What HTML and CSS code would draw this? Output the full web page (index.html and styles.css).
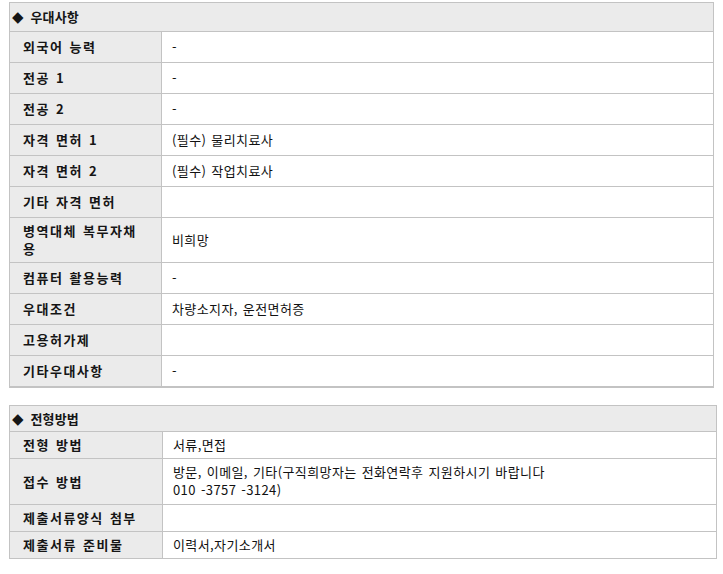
FILE: index.html
```html
<!DOCTYPE html>
<html lang="ko">
<head>
<meta charset="utf-8">
<link rel="stylesheet" href="styles.css">
</head>
<body>
<div class="page">
  <table class="info info-pref">
    <colgroup><col class="c-label"><col class="c-value"></colgroup>
    <tr><th class="sec" colspan="2"><span class="dia">◆</span> 우대사항</th></tr>
    <tr><th>외국어 능력</th><td>-</td></tr>
    <tr><th>전공 1</th><td>-</td></tr>
    <tr><th>전공 2</th><td>-</td></tr>
    <tr><th>자격 면허 1</th><td>(필수) 물리치료사</td></tr>
    <tr><th>자격 면허 2</th><td>(필수) 작업치료사</td></tr>
    <tr><th>기타 자격 면허</th><td></td></tr>
    <tr class="tall"><th>병역대체 복무자채용</th><td>비희망</td></tr>
    <tr><th>컴퓨터 활용능력</th><td>-</td></tr>
    <tr><th>우대조건</th><td>차량소지자, 운전면허증</td></tr>
    <tr><th>고용허가제</th><td></td></tr>
    <tr><th>기타우대사항</th><td>-</td></tr>
  </table>

  <table class="info info-select">
    <colgroup><col class="c-label2"><col class="c-value"></colgroup>
    <tr><th class="sec" colspan="2"><span class="dia">◆</span> 전형방법</th></tr>
    <tr><th>전형 방법</th><td>서류,면접</td></tr>
    <tr><th>접수 방법</th><td class="multi">방문, 이메일, 기타(구직희망자는 전화연락후 지원하시기 바랍니다<br>010 -3757 -3124)</td></tr>
    <tr><th>제출서류양식 첨부</th><td></td></tr>
    <tr><th>제출서류 준비물</th><td>이력서,자기소개서</td></tr>
  </table>
</div>
</body>
</html>
```

FILE: styles.css
```css
html, body {
  margin: 0;
  padding: 0;
  background: #ffffff;
}

.page {
  padding: 2px 0 0 9px;
  font-family: "Noto Sans CJK KR", "Noto Sans", sans-serif;
  font-size: 13px;
  color: #111111;
}

.info {
  border-collapse: collapse;
  table-layout: fixed;
}

.c-label { width: 152px; }
.c-label2 { width: 153px; }

.info th,
.info td {
  border: 1px solid #c3c3c3;
  text-align: left;
  vertical-align: middle;
  line-height: 16px;
  height: 16px;
}

.info th {
  background: #ebebeb;
  font-weight: bold;
  letter-spacing: 1.5px;
  word-spacing: 1px;
  padding: 7px 20px 7px 13px;
  color: #151515;
}

.info td {
  background: #ffffff;
  padding: 7px 10px;
  font-weight: normal;
  letter-spacing: 0.4px;
  word-spacing: 1px;
}

.info th.sec {
  padding: 6px 4px 6px 2px;
  letter-spacing: 0.2px;
  word-spacing: 3px;
}

.dia {
  display: inline-block;
  font-family: "DejaVu Sans", sans-serif;
  font-size: 15px;
  line-height: 16px;
  height: 16px;
  vertical-align: top;
  letter-spacing: 0;
}

.info-pref {
  width: 705px;
}

.info-pref tr.tall th,
.info-pref tr.tall td {
  padding-top: 4px;
  padding-bottom: 4px;
  line-height: 18px;
}

.info-pref tr:last-child th,
.info-pref tr:last-child td {
  border-bottom: 2px solid #c3c3c3;
}

.info-select {
  width: 708px;
  margin-top: 17px;
}

.info-select th,
.info-select td {
  padding-top: 5px;
  padding-bottom: 5px;
}

.info-select th.sec {
  padding-top: 5px;
  padding-bottom: 4px;
}

.info-select td.multi {
  padding-top: 4px;
  padding-bottom: 5px;
  line-height: 18px;
}
```
